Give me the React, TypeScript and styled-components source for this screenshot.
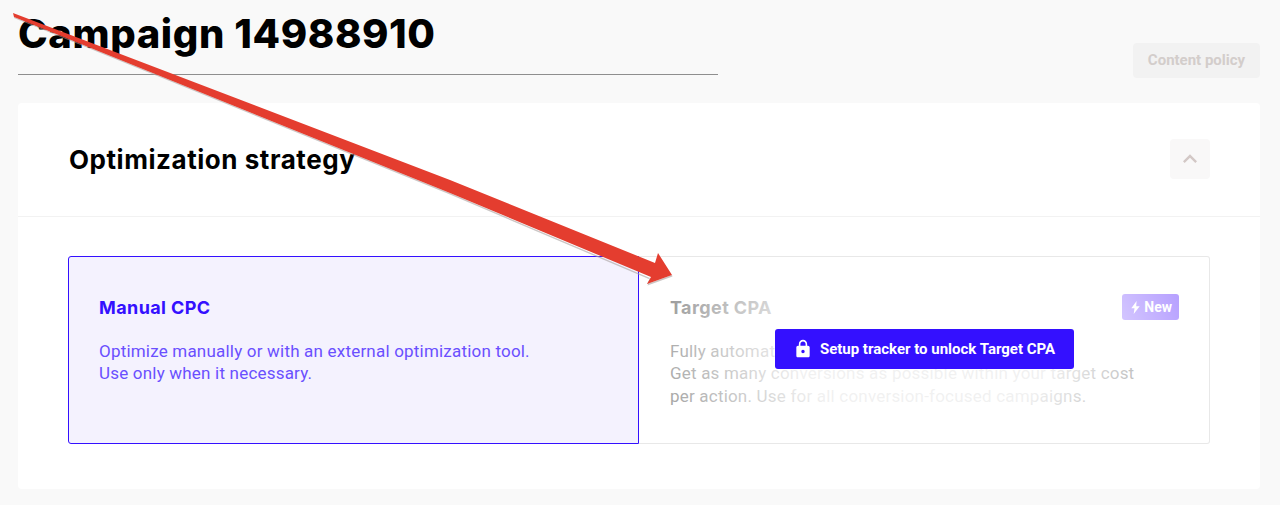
import styled, { createGlobalStyle } from 'styled-components'
import { MdLock, MdKeyboardArrowUp } from 'react-icons/md'

const GlobalStyle = createGlobalStyle`
  html, body {
    margin: 0;
    padding: 0;
    background: #f9f9f9;
  }
  body {
    font-family: Roboto, "Liberation Sans", sans-serif;
    overflow: hidden;
  }
`

const Page = styled.div`
  position: relative;
  width: 1280px;
  height: 505px;
  padding: 0 20px 0 18px;
  box-sizing: border-box;
  overflow: hidden;
`

const TopRow = styled.header`
  display: flex;
  justify-content: space-between;
  align-items: flex-start;
  height: 103px;
`

const PageTitle = styled.h1`
  width: 700px;
  height: 75px;
  margin: 0;
  box-sizing: border-box;
  border-bottom: 1px solid #8e8e8e;
  font-family: Inter, sans-serif;
  font-size: 40px;
  line-height: 68px;
  font-weight: 800;
  letter-spacing: 0.6px;
  color: #000;
`

const PolicyButton = styled.button`
  width: 127px;
  height: 35px;
  margin-top: 43px;
  padding: 0 0 2px;
  border: 0;
  border-radius: 4px;
  background: #f2f2f2;
  color: #d3cdcb;
  font-family: Roboto, sans-serif;
  font-size: 15px;
  font-weight: 700;
`

const Panel = styled.section`
  height: 386px;
  border-radius: 4px;
  background: #fff;
`

const PanelHeader = styled.div`
  display: flex;
  align-items: center;
  justify-content: space-between;
  height: 112px;
  padding: 0 50px 1px 51px;
  border-bottom: 1px solid #f2f2f2;
`

const PanelTitle = styled.h2`
  margin: 0;
  font-family: Inter, sans-serif;
  font-size: 26px;
  font-weight: 700;
  letter-spacing: 0.55px;
  color: #000;
`

const CollapseButton = styled.button`
  display: flex;
  align-items: center;
  justify-content: center;
  width: 40px;
  height: 40px;
  padding: 0;
  border: 0;
  border-radius: 4px;
  background: #f9f8f8;
  color: #d3c8c6;
  font-size: 28px;
`

const PanelBody = styled.div`
  display: grid;
  grid-template-columns: 571px 571px;
  height: 188px;
  padding: 39px 50px 0;
`

const StrategyCard = styled.div<{ $active?: boolean }>`
  position: relative;
  box-sizing: border-box;
  height: 188px;
  padding: 37px 31px 0 ${({ $active }) => ($active ? '30px' : '31px')};
  border: 1px solid ${({ $active }) => ($active ? '#3410ff' : '#e8e8e8')};
  border-left-width: ${({ $active }) => ($active ? '1px' : '0')};
  border-radius: ${({ $active }) => ($active ? '3px 0 0 3px' : '0 3px 3px 0')};
  background: ${({ $active }) => ($active ? '#f4f2fe' : '#fff')};
`

const CardHead = styled.div`
  display: flex;
  align-items: center;
  justify-content: space-between;
  height: 26px;
`

const CardTitle = styled.h3<{ $active?: boolean }>`
  margin: 0;
  font-family: Inter, sans-serif;
  font-size: 18px;
  font-weight: 700;
  letter-spacing: 0.4px;
  color: ${({ $active }) => ($active ? '#3410ff' : '#7d7d7d')};
`

const CardText = styled.p<{ $active?: boolean }>`
  margin: 19.6px 0 0;
  max-width: 480px;
  font-size: 17px;
  letter-spacing: 0.2px;
  line-height: 22.5px;
  color: ${({ $active }) => ($active ? '#6a4fff' : '#8a8a8a')};
`

const NewBadge = styled.span`
  display: flex;
  align-items: center;
  gap: 4px;
  height: 26px;
  margin-right: -1px;
  padding: 0 7px 0 9px;
  border-radius: 3px;
  background: #a184ff;
  color: #fff;
  font-size: 14px;
  font-weight: 700;
`

const Fade = styled.div`
  position: absolute;
  inset: 0;
  background: radial-gradient(
    ellipse 320px 200px at 50% 50%,
    rgba(255, 255, 255, 0.88) 40%,
    rgba(255, 255, 255, 0) 100%
  );
`

const UnlockButton = styled.button`
  position: absolute;
  left: 136px;
  top: 72px;
  display: flex;
  align-items: center;
  justify-content: center;
  gap: 7px;
  width: 299px;
  height: 40px;
  padding: 0 1px 0 0;
  border: 0;
  border-radius: 3px;
  background: #3410ff;
  color: #fff;
  font-family: Roboto, sans-serif;
  font-size: 15px;
  font-weight: 700;
  svg {
    font-size: 20px;
  }
`

const ArrowLayer = styled.svg`
  position: absolute;
  left: 0;
  top: 0;
  width: 1280px;
  height: 505px;
  pointer-events: none;
`

export default function App() {
  return (
    <Page>
      <GlobalStyle />
      <TopRow>
        <PageTitle>Campaign 14988910</PageTitle>
        <PolicyButton>Content policy</PolicyButton>
      </TopRow>

      <Panel>
        <PanelHeader>
          <PanelTitle>Optimization strategy</PanelTitle>
          <CollapseButton aria-label="Collapse">
            <MdKeyboardArrowUp />
          </CollapseButton>
        </PanelHeader>

        <PanelBody>
          <StrategyCard $active>
            <CardHead>
              <CardTitle $active>Manual CPC</CardTitle>
            </CardHead>
            <CardText $active>
              Optimize manually or with an external optimization tool.
              <br />
              Use only when it necessary.
            </CardText>
          </StrategyCard>

          <StrategyCard>
            <CardHead>
              <CardTitle>Target CPA</CardTitle>
              <NewBadge>
                <svg width="9" height="13" viewBox="0 0 9 13" fill="#fff">
                  <path d="M5.6 0 0.3 7.3h3.2L2.7 13 8.7 5.3H5.2z" />
                </svg>
                New
              </NewBadge>
            </CardHead>
            <CardText>
              Fully automated bidding with conversion goals.
              <br />
              Get as many conversions as possible within your target cost per action. Use for all conversion-focused campaigns.
            </CardText>
            <Fade />
            <UnlockButton>
              <MdLock />
              Setup tracker to unlock Target CPA
            </UnlockButton>
          </StrategyCard>
        </PanelBody>
      </Panel>

      <ArrowLayer viewBox="0 0 1280 505">
        <path
          d="M14 17 L450 193 L650 278 L647 284 L672 275 L672.5 276.5 L647.5 285.5 L650 279.5 L450 194.5 L14 18 Z"
          fill="#a9a09e"
          opacity="0.6"
        />
        <path d="M13 13 L450 180 L655 263 L658 253 L672 275 L647 284 L651 277 L450 193 L14 17 Z" fill="#e43d2f" />
      </ArrowLayer>
    </Page>
  )
}
